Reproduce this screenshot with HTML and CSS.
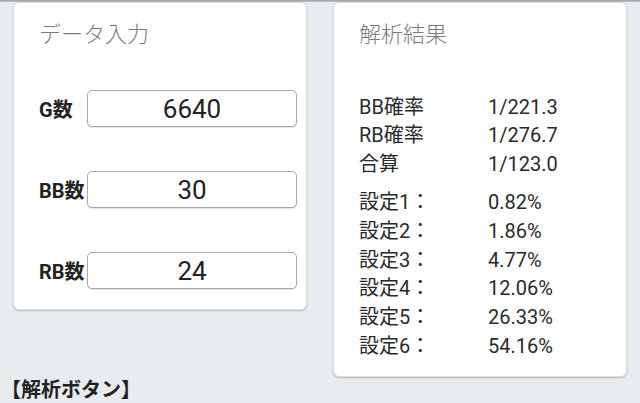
FILE: index.html
```html
<!DOCTYPE html>
<html lang="ja">
<head>
<meta charset="utf-8">
<link rel="stylesheet" href="styles.css">
</head>
<body>
<div class="topline"></div>
<div class="cards">
  <section class="card card-input">
    <h2 class="card-title">データ入力</h2>
    <div class="field">
      <label class="field-label">G数</label>
      <input class="field-input" type="text" value="6640" readonly>
    </div>
    <div class="field">
      <label class="field-label">BB数</label>
      <input class="field-input" type="text" value="30" readonly>
    </div>
    <div class="field">
      <label class="field-label">RB数</label>
      <input class="field-input" type="text" value="24" readonly>
    </div>
  </section>
  <section class="card card-result">
    <h2 class="card-title">解析結果</h2>
    <div class="rows">
      <div class="row"><span class="key">BB確率</span><span class="val">1/221.3</span></div>
      <div class="row"><span class="key">RB確率</span><span class="val">1/276.7</span></div>
      <div class="row"><span class="key">合算</span><span class="val">1/123.0</span></div>
    </div>
    <div class="rows rows-settings">
      <div class="row"><span class="key">設定1：</span><span class="val">0.82%</span></div>
      <div class="row"><span class="key">設定2：</span><span class="val">1.86%</span></div>
      <div class="row"><span class="key">設定3：</span><span class="val">4.77%</span></div>
      <div class="row"><span class="key">設定4：</span><span class="val">12.06%</span></div>
      <div class="row"><span class="key">設定5：</span><span class="val">26.33%</span></div>
      <div class="row"><span class="key">設定6：</span><span class="val">54.16%</span></div>
    </div>
  </section>
</div>
<h3 class="section-heading">【解析ボタン】</h3>
</body>
</html>
```

FILE: styles.css
```css
html, body {
  margin: 0;
  padding: 0;
}
body {
  background: #e9ecef;
  font-family: Roboto, "Noto Sans CJK JP", sans-serif;
  color: #222;
  width: 640px;
  height: 403px;
  overflow: hidden;
}
.topline {
  height: 2px;
  background: linear-gradient(#9c9c9c, #c4c4c4);
}
.cards {
  display: flex;
  align-items: flex-start;
  gap: 26px;
  padding: 0 13px;
}
.card {
  box-sizing: border-box;
  width: 294px;
  background: #fff;
  border: 1px solid #dcdcdc;
  border-radius: 6px;
  box-shadow: 0 1px 2px rgba(0, 0, 0, 0.22);
  padding: 17px 10px 0 25px;
}
.card-input {
  height: 308px;
}
.card-result {
  height: 375px;
}
.card-title {
  margin: 0;
  font-size: 22px;
  line-height: 30px;
  font-weight: 300;
  color: #7a7a7a;
}
.field {
  display: flex;
  align-items: center;
  margin-top: 40px;
}
.field + .field {
  margin-top: 44px;
}
.field-label {
  width: 48px;
  flex: none;
  font-size: 20px;
  font-weight: bold;
  color: #222;
}
.field-input {
  box-sizing: border-box;
  width: 210px;
  height: 37px;
  margin: 0;
  padding: 0;
  border: 1px solid #a9a9a9;
  border-radius: 5px;
  box-shadow: 0 1px 1px rgba(0, 0, 0, 0.12);
  background: #fff;
  font-family: Roboto, "Noto Sans CJK JP", sans-serif;
  font-size: 26px;
  color: #222;
  text-align: center;
  outline: none;
}
.rows {
  margin-top: 42.6px;
}
.rows-settings {
  margin-top: 9px;
}
.row {
  display: flex;
  font-size: 20px;
  line-height: 28.8px;
  color: #2a2a2a;
}
.key {
  width: 129px;
  flex: none;
}
.section-heading {
  margin: 2px 0 0;
  padding-left: 1px;
  font-size: 20px;
  line-height: 22px;
  font-weight: bold;
  color: #222;
}
```
